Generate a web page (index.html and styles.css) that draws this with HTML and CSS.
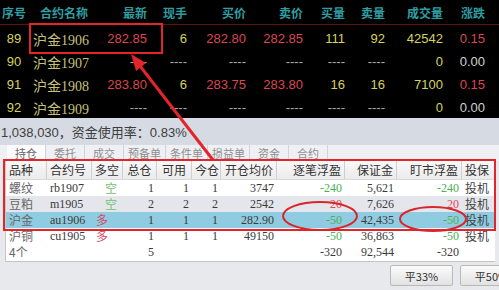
FILE: index.html
```html
<!DOCTYPE html>
<html>
<head>
<meta charset="utf-8">
<link rel="stylesheet" href="styles.css">
</head>
<body>
<div class="page">
  <section class="quote">
    <div class="qrow qhead">
      <span class="c-no">序号</span><span class="c-name">合约名称</span><span>最新</span><span>现手</span><span>买价</span><span>卖价</span><span>买量</span><span>卖量</span><span>成交量</span><span>涨跌</span><span></span>
    </div>
    <div class="qrow">
      <span class="c-no y">89</span><span class="c-name k">沪金1906</span><span class="r">282.85</span><span class="y">6</span><span class="r">282.80</span><span class="r">282.85</span><span class="y">111</span><span class="y">92</span><span class="y">42542</span><span class="r">0.15</span><span></span>
    </div>
    <div class="qrow">
      <span class="c-no y">90</span><span class="c-name k">沪金1907</span><span class="d">----</span><span class="d">----</span><span class="d">----</span><span class="d">----</span><span class="d">----</span><span class="d">----</span><span class="y">0</span><span class="w">0.00</span><span></span>
    </div>
    <div class="qrow">
      <span class="c-no y">91</span><span class="c-name k">沪金1908</span><span class="r">283.80</span><span class="y">6</span><span class="r">283.75</span><span class="r">283.80</span><span class="y">16</span><span class="y">16</span><span class="y">7100</span><span class="r">0.15</span><span></span>
    </div>
    <div class="qrow">
      <span class="c-no y">92</span><span class="c-name k">沪金1909</span><span class="d">----</span><span class="d">----</span><span class="d">----</span><span class="d">----</span><span class="d">----</span><span class="d">----</span><span class="y">0</span><span class="w">0.00</span><span></span>
    </div>
  </section>

  <div class="info">1,038,030，资金使用率：0.83%</div>

  <nav class="tabs">
    <span class="tab on">持仓</span><span class="tab">委托</span><span class="tab">成交</span><span class="tab">预备单</span><span class="tab">条件单</span><span class="tab">损益单</span><span class="tab">资金</span><span class="tab">合约</span>
  </nav>

  <div class="pos">
    <div class="prow phead">
      <span class="l">品种</span><span class="l">合约号</span><span class="l">多空</span><span class="c">总仓</span><span class="c">可用</span><span class="c">今仓</span><span>开仓均价</span><span>逐笔浮盈</span><span>保证金</span><span>盯市浮盈</span><span class="l">投保</span>
    </div>
    <div class="prow">
      <span class="l g1">螺纹</span><span class="l">rb1907</span><span class="l ks">空</span><span>1</span><span>1</span><span>1</span><span>3747</span><span class="gr">-240</span><span>5,621</span><span class="gr">-240</span><span class="l tb">投机</span>
    </div>
    <div class="prow alt">
      <span class="l g1">豆粕</span><span class="l">m1905</span><span class="l ks">空</span><span>2</span><span>2</span><span>2</span><span>2542</span><span class="rd">20</span><span>7,626</span><span class="rd">20</span><span class="l tb">投机</span>
    </div>
    <div class="prow sel">
      <span class="l g1">沪金</span><span class="l">au1906</span><span class="l kd">多</span><span>1</span><span>1</span><span>1</span><span>282.90</span><span class="gr">-50</span><span>42,435</span><span class="gr">-50</span><span class="l tb">投机</span>
    </div>
    <div class="prow">
      <span class="l g1">沪铜</span><span class="l">cu1905</span><span class="l kd">多</span><span>1</span><span>1</span><span>1</span><span>49150</span><span class="gr">-50</span><span>36,863</span><span class="gr">-50</span><span class="l tb">投机</span>
    </div>
    <div class="prow">
      <span class="l g1">4个</span><span></span><span></span><span>5</span><span></span><span></span><span></span><span>-320</span><span>92,544</span><span>-320</span><span></span>
    </div>
  </div>

  <div class="actions">
    <button class="btn">平33%</button>
    <button class="btn">平50%</button>
  </div>

  <svg class="marks" width="499" height="290" viewBox="0 0 499 290">
    <rect x="30" y="24" width="132" height="29" fill="none" stroke="#e3252b" stroke-width="2"/>
    <line x1="213" y1="160" x2="140" y2="66" stroke="#e3252b" stroke-width="3"/>
    <polygon points="131,54 146,63 136,71" fill="#e3252b"/>
    <rect x="4" y="160" width="491" height="70" fill="none" stroke="#e3252b" stroke-width="2"/>
    <ellipse cx="320" cy="216" rx="37" ry="14" fill="none" stroke="#d8262b" stroke-width="2"/>
    <ellipse cx="433" cy="219" rx="33" ry="12" fill="none" stroke="#d8262b" stroke-width="2"/>
  </svg>
</div>
</body>
</html>
```

FILE: styles.css
```css
body {
  margin: 0;
}

.page {
  position: relative;
  width: 499px;
  height: 290px;
  overflow: hidden;
  background: #e8e9ec;
  font-family: "Liberation Sans", "Noto Sans CJK SC", sans-serif;
}

/* ---------- quote board ---------- */
.quote {
  height: 118px;
  background: #000;
  overflow: hidden;
}

.qrow {
  display: grid;
  grid-template-columns: 28px 72px 47px 40px 59px 57px 42px 40px 58px 42px 14px;
  align-items: center;
  height: 23px;
  font-size: 13px;
}

.qrow > span {
  text-align: right;
  white-space: nowrap;
}

.qrow > .c-no {
  text-align: center;
}

.qrow > .c-name {
  text-align: left;
  padding-left: 5px;
  font-family: "Liberation Serif", "Noto Sans CJK SC", serif;
  font-size: 14px;
}

.qhead {
  height: 24px;
  border-bottom: 1px solid #5e1515;
  margin-bottom: 2px;
  color: #2f9ea3;
  font-family: "Noto Sans CJK SC", sans-serif;
  font-size: 12px;
  font-weight: 700;
}

.qhead > .c-name {
  text-align: center;
  padding-left: 0;
  font-family: "Noto Sans CJK SC", sans-serif;
  font-size: 12px;
}

.y { color: #d7d35c; }
.r { color: #dc4650; }
.k { color: #c6c07a; }
.d { color: #a9a9a9; }
.w { color: #d2d2d2; }

/* ---------- info bar ---------- */
.info {
  height: 27px;
  background: #d5dae3;
  display: flex;
  align-items: center;
  padding-left: 1px;
  font-size: 13px;
  color: #3d3d3d;
}

/* ---------- tabs ---------- */
.tabs {
  height: 16px;
  background: #eef0f3;
  display: flex;
  padding-left: 7px;
  font-family: "Noto Sans CJK SC", sans-serif;
  font-size: 11px;
  line-height: 16px;
  color: #8e8e8e;
}

.tab {
  min-width: 30px;
  padding: 0 4px;
  text-align: center;
  border-right: 1px solid #d0d3d8;
}

.tab.on {
  background: #fbfbfb;
  color: #666;
}

/* ---------- position table ---------- */
.pos {
  height: 101px;
  margin: 0 4px 0 5px;
  background: #fff;
  border-left: 1px solid #c9c9c9;
  box-sizing: border-box;
  border-bottom: 1px solid #c4c4c4;
  font-family: "Liberation Serif", "Noto Sans CJK SC", serif;
  font-size: 12px;
  color: #3a3a3a;
}

.prow {
  display: grid;
  grid-template-columns: 41px 45px 31px 34px 35px 29px 56px 68px 52px 65px 33px;
  height: 16px;
  line-height: 16px;
}

.prow > span {
  padding: 0 3px;
  text-align: right;
  white-space: nowrap;
  overflow: hidden;
}

.prow > .l { text-align: left; }
.prow > .c { text-align: center; }

.phead {
  height: 18px;
  line-height: 18px;
  background: linear-gradient(#f8f8f8, #ebebeb);
  border-bottom: 1px solid #d9d9d9;
  color: #333;
  font-family: "Noto Sans CJK SC", sans-serif;
}

.phead > span {
  border-right: 1px solid #cfcfcf;
}

.phead > span:last-child {
  border-right: none;
}

.prow.alt { background: #e4e6eb; }
.prow.sel { background: #90cce1; }

.g1 { color: #666; font-family: "Noto Sans CJK SC", sans-serif; }
.prow > .ks { color: #72c472; padding-left: 13px; font-family: "Noto Sans CJK SC", sans-serif; }
.prow > .kd { color: #d44a66; padding-left: 4px; font-family: "Noto Sans CJK SC", sans-serif; }
.gr { color: #4caf50; }
.rd { color: #e0484e; }
.tb { font-family: "Noto Sans CJK SC", sans-serif; color: #444; }

/* ---------- actions ---------- */
.actions {
  height: 28px;
  display: flex;
  gap: 7px;
  padding: 3px 0 0 390px;
  box-sizing: border-box;
}

.btn {
  flex: none;
  width: 63px;
  height: 21px;
  padding: 0;
  background: linear-gradient(#fbfbfb, #e2e2e2);
  border: 1px solid #b9b9b9;
  border-radius: 2px;
  font-family: "Noto Sans CJK SC", sans-serif;
  font-size: 11px;
  color: #333;
}

/* ---------- annotation overlay ---------- */
.marks {
  position: absolute;
  left: 0;
  top: 0;
  pointer-events: none;
}
```
